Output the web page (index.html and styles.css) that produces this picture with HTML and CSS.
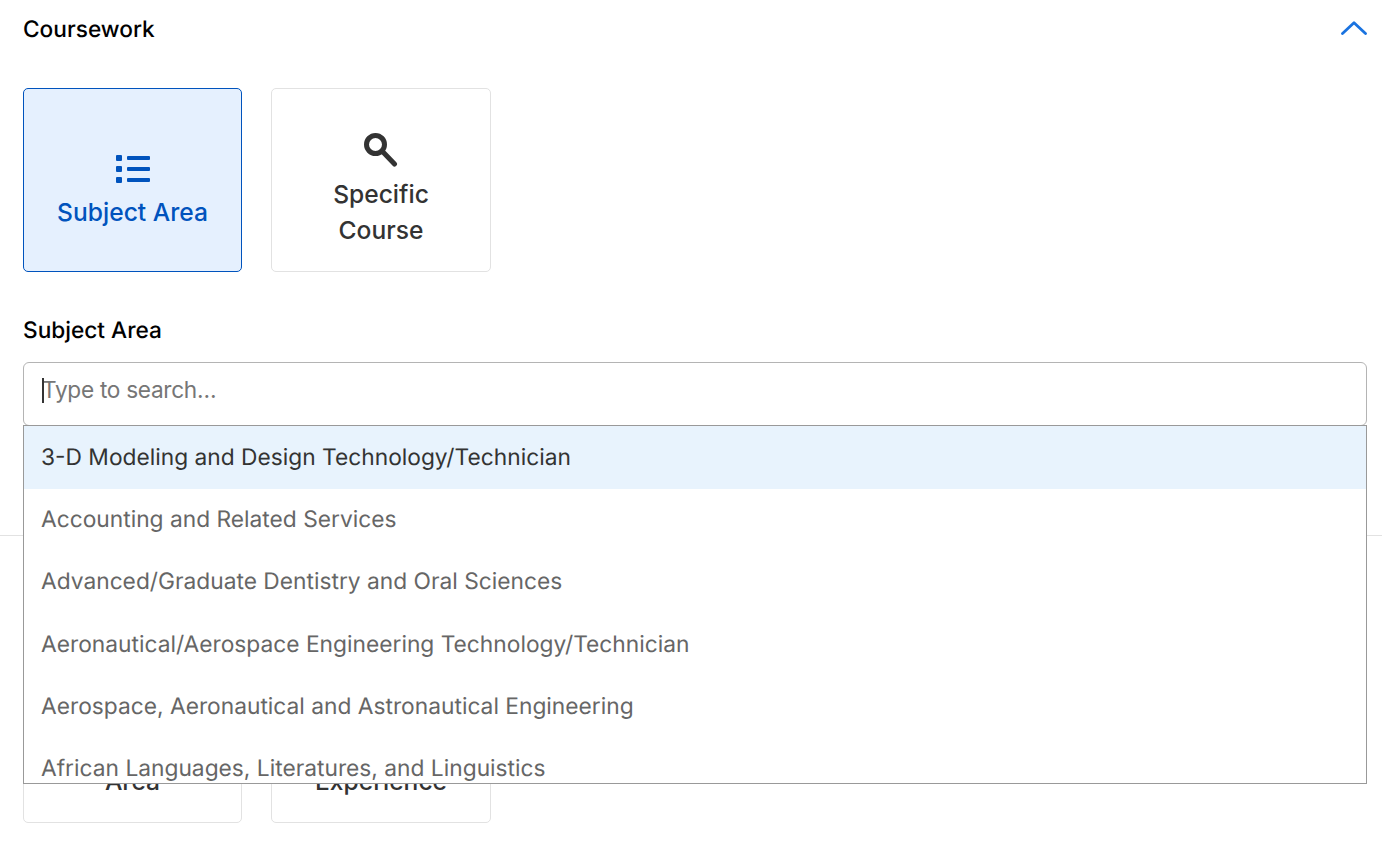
FILE: index.html
```html
<!DOCTYPE html>
<html lang="en">
<head>
<meta charset="utf-8">
<title>Coursework</title>
<link rel="stylesheet" href="styles.css">
</head>
<body>
<section class="section section-first">
  <header class="section-head">
    <h2 class="section-title">Coursework</h2>
    <svg class="chevron" width="26" height="14" viewBox="0 0 26 14"><path d="M1.5 12.5 13 1.8l11.5 10.7" fill="none" stroke="#1a73e0" stroke-width="2.8" stroke-linecap="round" stroke-linejoin="round"/></svg>
  </header>
  <div class="cards">
    <button class="card card-active">
      <svg class="icon" width="34" height="29" viewBox="0 0 34 29" fill="#0053bd"><rect x="0" y="0" width="6" height="6" rx="1"/><rect x="0" y="11" width="6" height="6" rx="1"/><rect x="0" y="22" width="6" height="6" rx="1"/><rect x="11" y="1" width="23" height="4" rx="1"/><rect x="11" y="12" width="23" height="4" rx="1"/><rect x="11" y="23" width="23" height="4" rx="1"/></svg>
      <span class="card-label">Subject Area</span>
    </button>
    <button class="card card-wide">
      <svg class="icon" width="34" height="34" viewBox="0 0 34 34" fill="none" stroke="#333" stroke-width="5"><circle cx="11.5" cy="11.5" r="9"/><path d="M19 19 30.5 31" stroke-linecap="round"/></svg>
      <span class="card-label">Specific<br>Course</span>
    </button>
  </div>
  <label class="field-label" for="subject">Subject Area</label>
  <div class="combo">
    <input class="combo-input" id="subject" type="text" placeholder="Type to search…">
    <span class="caret"></span>
    <ul class="dropdown">
      <li class="option option-active">3-D Modeling and Design Technology/Technician</li>
      <li class="option">Accounting and Related Services</li>
      <li class="option">Advanced/Graduate Dentistry and Oral Sciences</li>
      <li class="option">Aeronautical/Aerospace Engineering Technology/Technician</li>
      <li class="option">Aerospace, Aeronautical and Astronautical Engineering</li>
      <li class="option">African Languages, Literatures, and Linguistics</li>
      <li class="option">Agricultural Business and Management</li>
    </ul>
  </div>
</section>
<section class="section section-second">
  <h2 class="section-title">Experience</h2>
  <div class="cards cards-second">
    <button class="card">
      <span class="card-label">Practice<br>Area</span>
    </button>
    <button class="card card-wide">
      <span class="card-label">Work<br>Experience</span>
    </button>
  </div>
</section>
</body>
</html>
```
FILE: styles.css
```css
* { box-sizing: border-box; }
html, body { margin: 0; padding: 0; }
body {
  height: 850px;
  overflow: hidden;
  background: #fff;
  color: #000;
  font-family: Inter, "Liberation Sans", sans-serif;
  text-rendering: geometricPrecision;
}
.section { padding: 0 15px 0 23px; }
.section-first { height: 536px; border-bottom: 1px solid #e2e2e2; }
.section-head {
  height: 58px;
  padding-top: 2px;
  display: flex;
  align-items: center;
  justify-content: space-between;
}
.section-title {
  margin: 0;
  font-size: 22.67px;
  font-weight: 500;
  line-height: 30px;
}
.chevron { display: block; margin-top: -4px; }
.cards { display: flex; gap: 29px; margin-top: 30px; }
.card {
  width: 219px;
  height: 184px;
  padding: 24px 0 0;
  display: flex;
  flex-direction: column;
  align-items: center;
  justify-content: center;
  background: #fff;
  border: 1px solid #e2e2e2;
  border-radius: 5px;
  color: #333;
  font: inherit;
}
.card-wide { width: 220px; padding-top: 21px; }
.card-active {
  padding-top: 25px;
  background: #e5f0fe;
  border-color: #0053bd;
  color: #0053bd;
}
.icon { display: block; }
.card-label {
  display: block;
  font-size: 24.6px;
  font-weight: 500;
  line-height: 36px;
  text-align: center;
}
.card-active .card-label { margin-top: 10px; }
.card-wide .card-label { margin-top: 9px; }
.cards-second .card { padding-top: 64px; }
.cards-second .card-label { margin-top: 0; }
.field-label {
  display: block;
  margin-top: 44px;
  font-size: 22.67px;
  font-weight: 500;
  line-height: 30px;
}
.combo { position: relative; margin-top: 16px; }
.combo-input {
  display: block;
  width: 100%;
  height: 64px;
  padding: 0 18px 9px;
  border: 1px solid #b4b4b4;
  border-radius: 6px;
  outline: none;
  background: #fff;
  caret-color: transparent;
  font-family: inherit;
  font-size: 22.67px;
  color: #333;
}
.combo-input::placeholder { color: #767676; opacity: 1; letter-spacing: -0.3px; }
.caret {
  position: absolute;
  left: 19px;
  top: 16px;
  width: 2px;
  height: 25px;
  background: #333;
}
.dropdown {
  position: absolute;
  left: 0;
  right: 0;
  top: 63px;
  height: 359px;
  margin: 0;
  padding: 0;
  overflow: hidden;
  list-style: none;
  background: #fff;
  border: 1px solid #999;
  z-index: 2;
}
.option {
  height: 62.3px;
  padding: 0 17px;
  display: flex;
  align-items: center;
  font-size: 22.75px;
  color: #666;
  white-space: nowrap;
}
.option-active {
  height: 63px;
  margin-bottom: -0.7px;
  padding-bottom: 0.7px;
  background: #e8f3fd;
  color: #333;
}
.section-second { padding-top: 22px; }
.cards-second { margin-top: 51px; }
```
